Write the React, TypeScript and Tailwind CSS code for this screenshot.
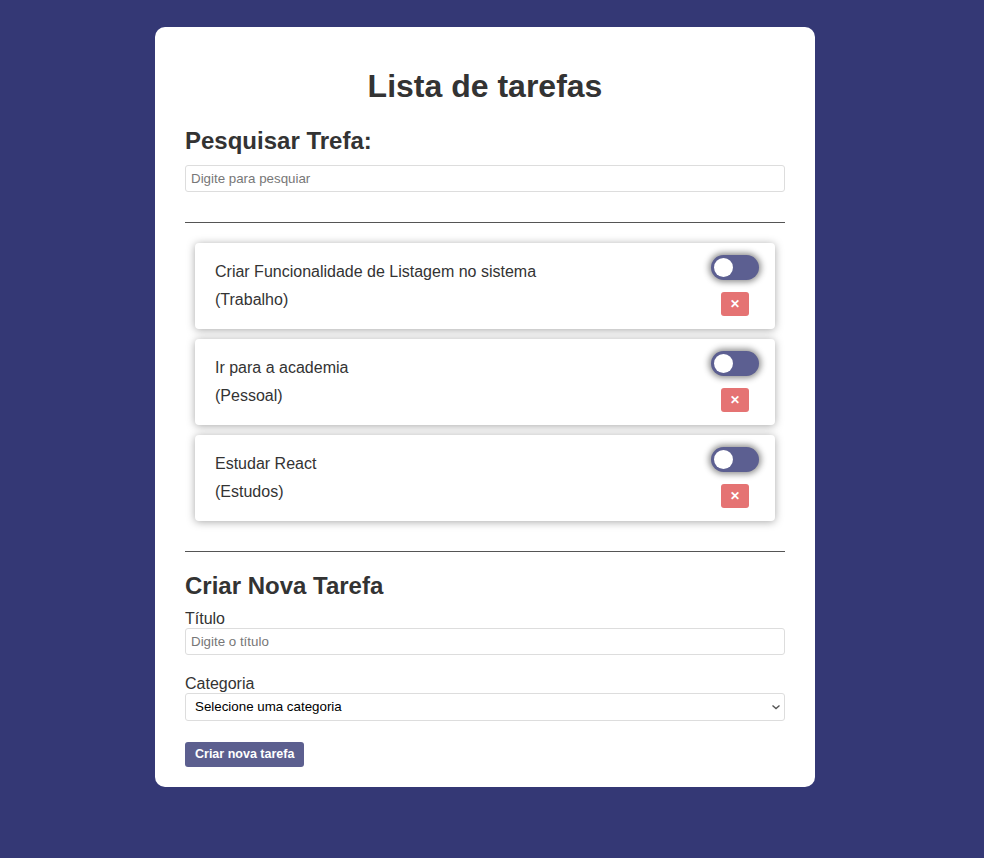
import { useState } from 'react'

const tarefas = [
  { id: 1, titulo: 'Criar Funcionalidade de Listagem no sistema', categoria: 'Trabalho' },
  { id: 2, titulo: 'Ir para a academia', categoria: 'Pessoal' },
  { id: 3, titulo: 'Estudar React', categoria: 'Estudos' },
]

function Toggle() {
  const [on, setOn] = useState(false)
  return (
    <button
      onClick={() => setOn(!on)}
      className="relative w-[48px] h-[25px] rounded-full bg-[#5c5f91] shadow-[0_0_6px_2px_rgba(0,0,0,0.45)]"
    >
      <span
        className={`absolute top-[3px] w-[19px] h-[19px] rounded-full bg-white transition-all ${on ? 'left-[26px]' : 'left-[3px]'}`}
      />
    </button>
  )
}

function TarefaCard({ titulo, categoria }: { titulo: string; categoria: string }) {
  return (
    <div className="flex justify-between bg-white rounded-[4px] pl-5 pr-4 pt-3 pb-[13px] shadow-[0_1px_8px_rgba(0,0,0,0.35)]">
      <div className="pt-2 text-[16px] leading-[18px] text-[#333]">
        <p>{titulo}</p>
        <p className="mt-[10px]">({categoria})</p>
      </div>
      <div className="flex flex-col items-center gap-3">
        <Toggle />
        <button className="w-[28px] h-[24px] rounded-[3px] bg-[#e57373] text-white text-[12px] font-bold flex items-center justify-center">
          ✕
        </button>
      </div>
    </div>
  )
}

export default function App() {
  return (
    <div className="min-h-[858px] bg-[#343875] pt-[27px] font-['Liberation_Sans',Arial,sans-serif] text-[#333]">
      <div className="w-[660px] ml-[155px] bg-white rounded-[10px] px-[30px] pt-[41px] pb-5">
        <h1 className="text-center text-[32px] font-bold leading-[37px]">Lista de tarefas</h1>
        <h2 className="mt-[22px] text-[24px] font-bold leading-[28px]">Pesquisar Trefa:</h2>
        <input
          placeholder="Digite para pesquiar"
          className="mt-[10px] block w-full h-[27px] border border-[#ddd] rounded-[3px] px-[5px] text-[13.33px] placeholder:text-[#777] outline-none"
        />
        <hr className="mt-[30px] border-0 border-t border-[#555]" />
        <div className="mt-5 px-[10px] flex flex-col gap-[10px]">
          {tarefas.map(t => (
            <TarefaCard key={t.id} titulo={t.titulo} categoria={t.categoria} />
          ))}
        </div>
        <hr className="mt-[30px] border-0 border-t border-[#555]" />
        <h2 className="mt-[20px] text-[24px] font-bold leading-[28px]">Criar Nova Tarefa</h2>
        <label className="block mt-[10px] text-[16px] leading-[18px]">Título</label>
        <input
          placeholder="Digite o título"
          className="block w-full h-[27px] border border-[#ddd] rounded-[3px] px-[5px] text-[13.33px] placeholder:text-[#777] outline-none"
        />
        <label className="block mt-[20px] text-[16px] leading-[18px]">Categoria</label>
        <div className="relative">
          <select className="block w-full h-[28px] appearance-none border border-[#ddd] rounded-[3px] px-[9px] text-[13.33px] text-black bg-white outline-none">
            <option>Selecione uma categoria</option>
            <option>Trabalho</option>
            <option>Pessoal</option>
            <option>Estudos</option>
          </select>
          <svg className="absolute right-[4px] top-[10px] pointer-events-none" width="10" height="8" viewBox="0 0 10 8">
            <path d="M1.5 2.5 L5 5.5 L8.5 2.5" fill="none" stroke="#555" strokeWidth="1.4" />
          </svg>
        </div>
        <button className="mt-[21px] block h-[25px] px-[10px] rounded-[3px] bg-[#5c5f8f] text-white text-[12.5px] font-bold">
          Criar nova tarefa
        </button>
      </div>
    </div>
  )
}
